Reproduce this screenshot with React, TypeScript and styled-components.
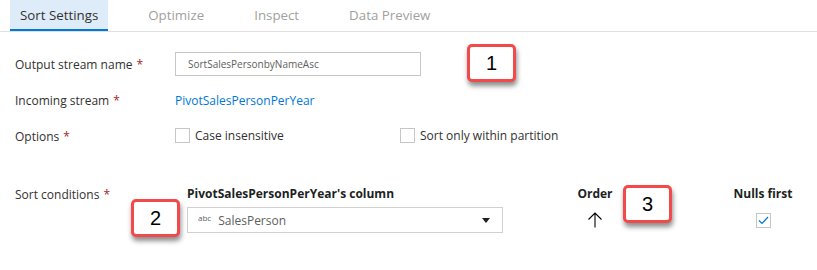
import React from 'react';
import styled, { createGlobalStyle } from 'styled-components';

const GlobalStyle = createGlobalStyle`
  html, body {
    margin: 0;
    padding: 0;
    background-color: #ffffff;
  }

  body {
    font-family: 'Open Sans', 'Noto Sans', sans-serif;
    color: #323130;
    font-size: 12px;
  }
`;

const Page = styled('div')`
  position: relative;
  width: 817px;
  height: 270px;
  overflow: hidden;
`;

const TabBar = styled('nav')`
  display: flex;
  gap: 30px;
  height: 31px;
  padding-left: 10px;
  border-bottom: 1px solid #e1dfdd;
`;

const Tab = styled('div')<{ $active?: boolean }>`
  display: flex;
  align-items: center;
  padding: 0 10px;
  box-sizing: border-box;
  height: 31px;
  font-size: 13.3px;
  color: ${ ({ $active }) => ($active ? '#323130' : '#a19f9d') };
  background-color: ${ ({ $active }) => ($active ? '#deecf9' : 'transparent') };
  border-bottom: 2px solid ${ ({ $active }) => ($active ? '#0078d4' : 'transparent') };
`;

const Form = styled('section')`
  display: grid;
  grid-template-columns: 160px 1fr;
  padding: 20px 0 0 15px;
`;

const Label = styled('div')<{ $height: number; $top?: number }>`
  display: flex;
  align-items: center;
  align-self: start;
  height: ${ ({ $height }) => $height }px;
  margin-top: ${ ({ $top }) => $top ?? 0 }px;
  font-size: 12px;
  color: #323130;
`;

const Field = styled('div')<{ $height?: number; $top?: number }>`
  display: flex;
  align-items: center;
  height: ${ ({ $height }) => ($height ? `${ $height }px` : 'auto') };
  margin-top: ${ ({ $top }) => $top ?? 0 }px;
`;

const Required = styled('span')`
  color: #a4262c;
  margin-left: 4px;
`;

const TextInput = styled('div')`
  display: flex;
  align-items: center;
  box-sizing: border-box;
  width: 246px;
  height: 24px;
  padding-left: 12px;
  border: 1px solid #c8c6c4;
  font-size: 10px;
  color: #605e5c;
`;

const StreamLink = styled('a')`
  color: #0078d4;
  font-size: 12px;
  text-decoration: none;
`;

const CheckOption = styled('label')`
  display: flex;
  align-items: center;
  gap: 5px;
  width: 225px;
  font-size: 12px;
  color: #323130;
`;

const CheckBox = styled('span')`
  display: inline-flex;
  align-items: center;
  justify-content: center;
  box-sizing: border-box;
  width: 15px;
  height: 15px;
  border: 1px solid #c8c6c4;
  background-color: #ffffff;
`;

const SortGrid = styled('div')`
  display: grid;
  grid-template-columns: 316px 42px 100px 68px 100px;
  grid-template-rows: 22px 26px;
  row-gap: 3px;
  margin-left: 12px;
`;

const ColumnHeader = styled('div')<{ $col: number; $center?: boolean }>`
  grid-column: ${ ({ $col }) => $col };
  display: flex;
  align-items: center;
  justify-content: ${ ({ $center }) => ($center ? 'center' : 'flex-start') };
  font-size: 12px;
  font-weight: 700;
  color: #201f1e;
`;

const Cell = styled('div')<{ $col: number }>`
  grid-column: ${ ({ $col }) => $col };
  display: flex;
  align-items: center;
  justify-content: center;
`;

const Dropdown = styled('div')`
  grid-column: 1;
  display: flex;
  align-items: center;
  box-sizing: border-box;
  width: 316px;
  height: 26px;
  padding: 0 12px 0 10px;
  border: 1px solid #d2d0ce;
  color: #605e5c;
  font-size: 12px;
`;

const TypeTag = styled('span')`
  align-self: flex-start;
  margin-top: 4px;
  margin-right: 7px;
  font-size: 8px;
  color: #605e5c;
`;

const DropdownValue = styled('span')`
  flex: 1;
`;

const Callout = styled('div')<{ $x: number; $y: number }>`
  position: absolute;
  left: ${ ({ $x }) => $x }px;
  top: ${ ({ $y }) => $y }px;
  display: flex;
  align-items: center;
  justify-content: center;
  box-sizing: border-box;
  width: 49px;
  height: 38px;
  border: 3px solid #f24a4a;
  border-radius: 5px;
  background-color: #ffffff;
  box-shadow: 1px 4px 5px rgba(0, 0, 0, 0.45);
  font-family: 'Liberation Sans', Arial, sans-serif;
  font-size: 20px;
  color: #000000;
`;

const tabs = ['Sort Settings', 'Optimize', 'Inspect', 'Data Preview'];

const App: React.FC = () => {
  return (
    <Page>
      <GlobalStyle />
      <TabBar>
        {
          tabs.map((tab, index) => (
            <Tab key={ tab } $active={ index === 0 }>{ tab }</Tab>
          ))
        }
      </TabBar>

      <Form>
        <Label $height={ 24 }>Output stream name<Required>*</Required></Label>
        <Field $height={ 24 }>
          <TextInput>SortSalesPersonbyNameAsc</TextInput>
        </Field>

        <Label $height={ 48 }>Incoming stream<Required>*</Required></Label>
        <Field $height={ 48 }>
          <StreamLink href='#'>PivotSalesPersonPerYear</StreamLink>
        </Field>

        <Label $height={ 24 }>Options<Required>*</Required></Label>
        <Field $height={ 22 }>
          <CheckOption><CheckBox />Case insensitive</CheckOption>
          <CheckOption><CheckBox />Sort only within partition</CheckOption>
        </Field>

        <Label $height={ 24 } $top={ 34 }>Sort conditions<Required>*</Required></Label>
        <Field $top={ 34 }>
          <SortGrid>
            <ColumnHeader $col={ 1 }>PivotSalesPersonPerYear's column</ColumnHeader>
            <ColumnHeader $col={ 3 } $center>Order</ColumnHeader>
            <ColumnHeader $col={ 5 } $center>Nulls first</ColumnHeader>

            <Dropdown>
              <TypeTag>abc</TypeTag>
              <DropdownValue>SalesPerson</DropdownValue>
              <svg width='8' height='5' viewBox='0 0 8 5'>
                <path d='M0 0 L8 0 L4 5 Z' fill='#201f1e' />
              </svg>
            </Dropdown>
            <Cell $col={ 3 }>
              <svg width='16' height='16' viewBox='0 0 16 16'>
                <path d='M8 15.5 V1 M1.5 7.5 L8 1 L14.5 7.5' stroke='#000000' strokeWidth='1.1' fill='none' />
              </svg>
            </Cell>
            <Cell $col={ 5 }>
              <CheckBox>
                <svg width='11' height='9' viewBox='0 0 11 9'>
                  <path d='M1 4.5 L4 7.5 L10 1' stroke='#0078d4' strokeWidth='1.2' fill='none' />
                </svg>
              </CheckBox>
            </Cell>
          </SortGrid>
        </Field>
      </Form>

      <Callout $x={ 467 } $y={ 44 }>1</Callout>
      <Callout $x={ 131 } $y={ 199 }>2</Callout>
      <Callout $x={ 623 } $y={ 185 }>3</Callout>
    </Page>
  );
};

export default App;
